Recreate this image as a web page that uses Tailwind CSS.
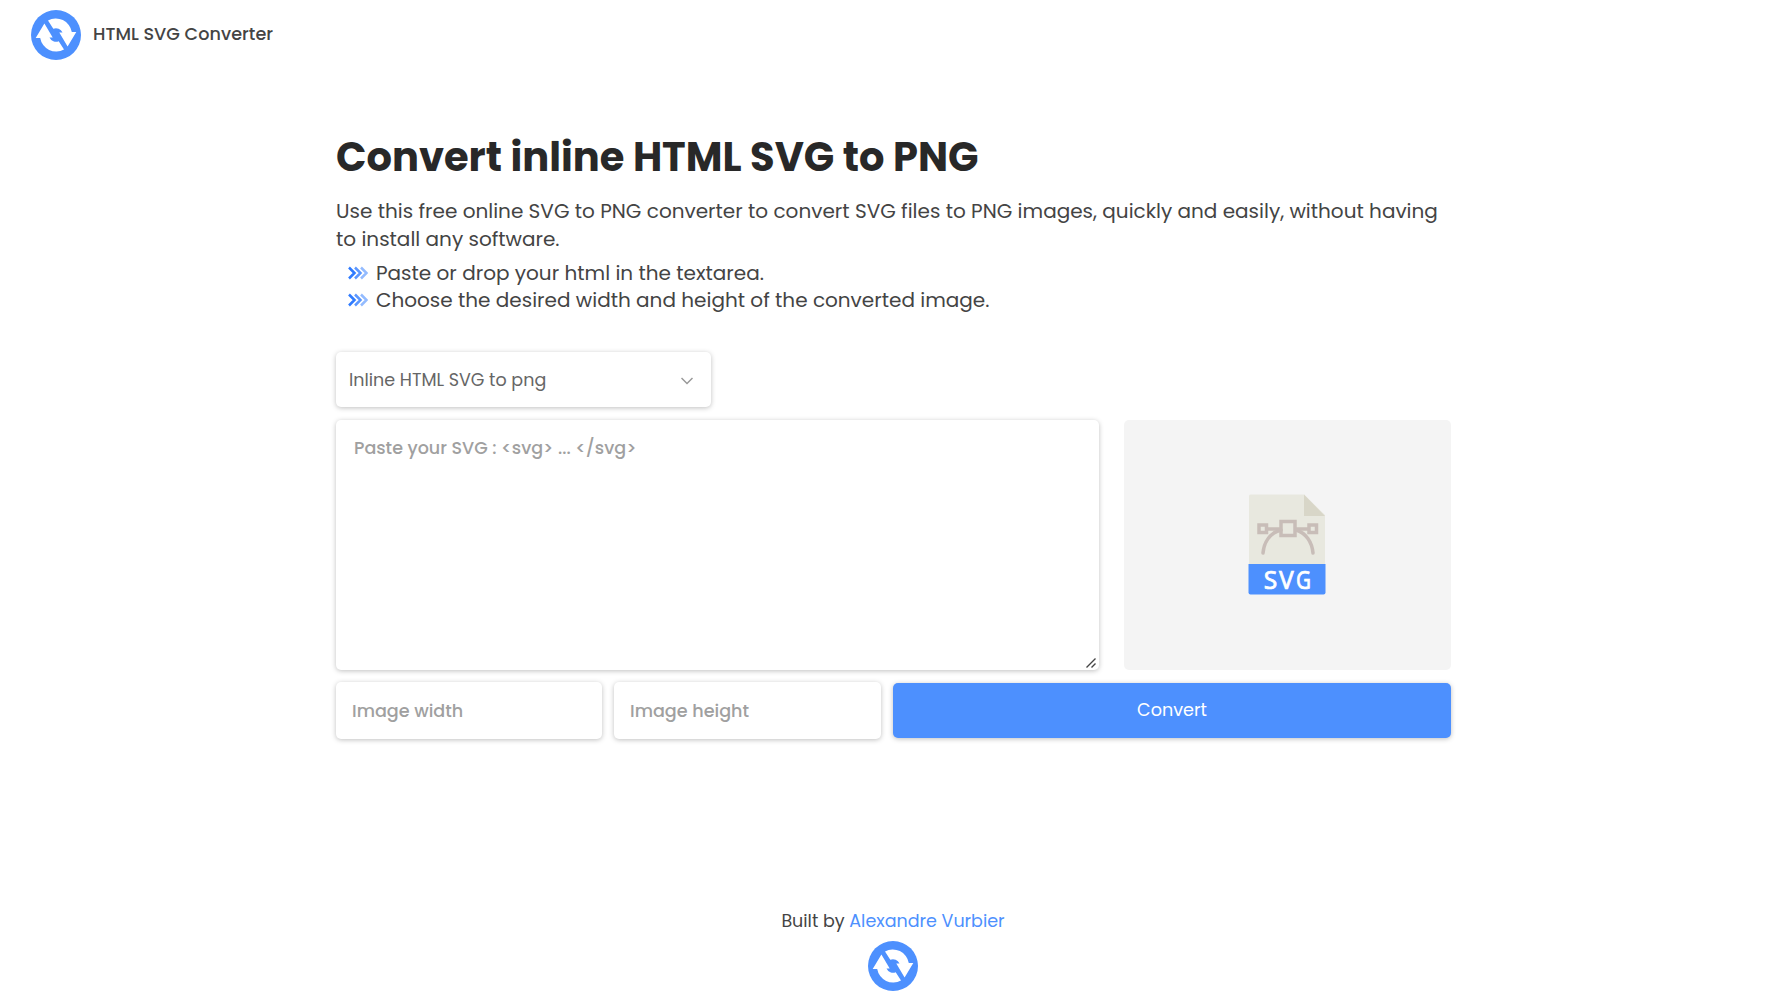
<!DOCTYPE html>
<html lang="en">
<head>
<meta charset="utf-8">
<title>HTML SVG Converter</title>
<script src="https://cdn.jsdelivr.net/npm/@tailwindcss/browser@4"></script>
</head>
<body class="h-screen overflow-hidden bg-white font-['Poppins','Inter',sans-serif] text-[17.6px] text-[#444] flex flex-col">
<svg class="hidden"><defs>
  <g id="logo"><circle cx="25" cy="25" r="25" fill="#4d90fe"/><g id="half"><path fill="#fff" d="M17 10.5A16.200 16.200 0 0 1 40.800 22H45.300L36.600 36.400 28.300 22.500H31.500A7.200 7.200 0 0 0 22.300 18.800Z"/></g><use href="#half" transform="rotate(180 25 25)"/></g>
  <g id="arrows" fill="none" stroke-width="2.5"><path d="M1 1.5 6.5 7 1 12.5" stroke="#2f7bff"/><path d="M7 1.5 12.5 7 7 12.5" stroke="#5b97ff"/><path d="M13 1.5 18.5 7 13 12.5" stroke="#93bbff"/></g>
</defs></svg>
<header class="flex items-center pl-[31px] pt-[10px] gap-3">
  <svg class="size-[50px]" viewBox="0 0 50 50"><use href="#logo"/></svg>
  <span class="-mt-0.5 font-medium tracking-[0.04px]">HTML SVG Converter</span>
</header>
<main class="ml-[336px] w-[1115px] pt-[67px]">
  <h1 class="text-[40px] leading-[60px] font-bold text-[#282828] whitespace-nowrap">Convert inline HTML SVG to PNG</h1>
  <p class="mt-[10px] text-xl leading-7">Use this free online SVG to PNG converter to convert SVG files to PNG images, quickly and easily, without having to install any software.</p>
  <ul class="mt-[7px] pl-3 text-xl leading-[27px]">
    <li class="flex items-center gap-2"><svg class="-mt-0.5 w-5 h-[14px]" viewBox="0 0 20 14"><use href="#arrows"/></svg>Paste or drop your html in the textarea.</li>
    <li class="flex items-center gap-2"><svg class="-mt-0.5 w-5 h-[14px]" viewBox="0 0 20 14"><use href="#arrows"/></svg>Choose the desired width and height of the converted image.</li>
  </ul>
  <div class="mt-[38px] flex h-[55px] w-[375px] items-center justify-between rounded-[5px] bg-white pl-[13px] pr-[18px] text-[#666] shadow-[0_1px_5px_rgba(0,0,0,0.25)]">
    <span class="pt-px text-[17.5px]">Inline HTML SVG to png</span>
    <svg class="mt-0.5 h-2 w-3" viewBox="0 0 12 8" fill="none" stroke="#999" stroke-width="1.5"><path d="M.5 1 6 6.5 11.5 1"/></svg>
  </div>
  <div class="mt-[13px] flex h-[250px] justify-between">
    <div class="relative w-[763px] rounded-[5px] bg-white pl-[18px] pt-[15px] text-[17.5px] leading-[26.4px] font-medium text-[#a0a0a0] shadow-[0_1px_5px_rgba(0,0,0,0.25)]">
      Paste your SVG : &lt;svg&gt; ... &lt;/svg&gt;
      <svg class="absolute bottom-[2px] right-[3px] size-[10px]" viewBox="0 0 10 10" stroke="#444" stroke-width="1.4"><path d="M.5 9.5 9.5.5M5.5 9.5 9.5 5.5"/></svg>
    </div>
    <div class="flex w-[327px] items-center justify-center rounded-[5px] bg-[#f4f4f4] pr-[2px] pb-[2px]">
      <svg class="h-[101px] w-[78px]" viewBox="0 0 78 101">
        <path d="M2.5.5H56L77 21V71H1V2Q1 .5 2.5.5Z" fill="#e8e8df"/><path d="M56 .5 77 22H56Z" fill="#d8d6c8"/>
        <path d="M.5 70H77.500V98.500Q77.500 100.500 75.500 100.500H2.500Q.5 100.500.5 98.500V70Z" fill="#4d90fe"/>
        <g fill="none" stroke="#c8bdb8" stroke-width="3.500"><path d="M20 35H33M48 35H60"/><path d="M15 59C16 48 22 39 33 36M65 59C64 48 58 39 48 36" stroke-linecap="round"/><rect x="11" y="31" width="7.500" height="7.500"/><rect x="61" y="31" width="7.500" height="7.500"/><rect x="33" y="27.500" width="14" height="14"/></g>
        <text y="95" text-anchor="middle" font-family="Noto Sans" font-size="24.600" fill="#fff" stroke="#fff" stroke-width=".7"><tspan x="22.500">S</tspan><tspan x="38.500">V</tspan><tspan x="55.500" textLength="15" lengthAdjust="spacingAndGlyphs">G</tspan></text>
      </svg>
    </div>
  </div>
  <div class="mt-3 flex h-[57px] items-center">
    <div class="flex h-[57px] w-[266px] items-center rounded-[5px] bg-white pt-0.5 pl-4 font-medium text-[#a0a0a0] shadow-[0_1px_5px_rgba(0,0,0,0.25)]">Image width</div>
    <div class="ml-3 flex h-[57px] w-[267px] items-center rounded-[5px] bg-white pt-0.5 pl-4 font-medium text-[#a0a0a0] shadow-[0_1px_5px_rgba(0,0,0,0.25)]">Image height</div>
    <div class="ml-3 flex h-[55px] flex-1 items-center justify-center rounded-[5px] bg-[#4d90fe] text-white shadow-[0_1px_5px_rgba(0,0,0,0.25)]">Convert</div>
  </div>
</main>
<footer class="mt-[169px] flex flex-col items-center pr-0.5">
  <p class="text-[17.5px] leading-[26px]">Built by <span class="text-[#4d90fe]">Alexandre Vurbier</span></p>
  <svg class="mt-[7px] size-[50px]" viewBox="0 0 50 50"><use href="#logo"/></svg>
</footer>
</body>
</html>
